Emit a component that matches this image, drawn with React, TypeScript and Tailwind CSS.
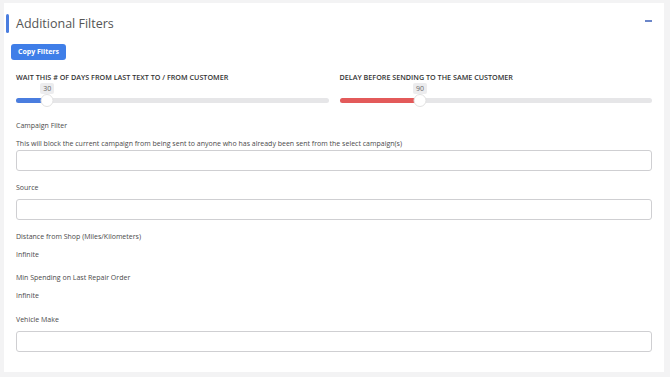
import React from "react";

function Slider({ value, pct, color }: { value: string; pct: number; color: string }) {
  return (
    <div className="relative h-[26px]">
      <div className="absolute left-0 right-0 top-[16px] h-[5px] rounded-full bg-[#e6e6e8]" />
      <div
        className="absolute left-0 top-[16px] h-[5px] rounded-full"
        style={{ width: `${pct}%`, background: color }}
      />
      <div
        className="absolute top-[12px] h-[13px] w-[13px] -translate-x-1/2 rounded-full border border-[#e2e2e2] bg-white"
        style={{ left: `${pct}%` }}
      />
      <div
        className="absolute top-[1px] -translate-x-1/2 rounded-[2px] bg-[#ececee] px-[3px] text-[7px] leading-[11px] text-[#666]"
        style={{ left: `${pct}%` }}
      >
        {value}
      </div>
    </div>
  );
}

function Input() {
  return <div className="h-[21px] rounded-[3px] border border-[#cfcfd2] bg-white" />;
}

export default function App() {
  return (
    <div
      className="h-[377px] w-[670px] bg-[#f3f3f4] pl-[4px] pr-[6px] pt-[3px]"
      style={{ fontFamily: '"Open Sans", "Noto Sans", sans-serif' }}
    >
      <div className="h-[369px] bg-white">
        <div className="flex items-center pt-[10px]">
          <div className="ml-[2px] h-[19px] w-[3px] rounded-full bg-[#4a7ddf]" />
          <div className="ml-[7px] mt-[1px] text-[12.5px] leading-[20px] text-[#555]">Additional Filters</div>
          <div className="ml-auto mr-[12px] mt-[-5px] h-[2px] w-[7px] bg-[#6b86c9]" />
        </div>
        <div className="flex px-[7px] pt-[10px]">
          <button className="h-[16px] rounded-[3px] bg-[#3f7ee8] px-[7px] text-[7px] font-bold leading-[16px] text-white">
            Copy Filters
          </button>
        </div>
        <div className="flex gap-[11px] px-[12px] pt-[12px]">
          <div className="flex-1">
            <div className="text-[7.2px] font-semibold leading-[10px] text-[#333]">
              WAIT THIS # OF DAYS FROM LAST TEXT TO / FROM CUSTOMER
            </div>
            <Slider value="30" pct={10} color="#4a7ddf" />
          </div>
          <div className="flex-1">
            <div className="text-[7.2px] font-semibold leading-[10px] text-[#333]">
              DELAY BEFORE SENDING TO THE SAME CUSTOMER
            </div>
            <Slider value="90" pct={25.8} color="#e35a5a" />
          </div>
        </div>
        <div className="px-[12px] pt-[13px] text-[7px] leading-[10px] text-[#4a4a4a]">
          <div>Campaign Filter</div>
          <div className="pt-[8px]">
            This will block the current campaign from being sent to anyone who has already been sent from the select campaign(s)
          </div>
          <div className="pt-[1px]">
            <Input />
          </div>
          <div className="pt-[12px]">Source</div>
          <div className="pt-[6px]">
            <Input />
          </div>
          <div className="pt-[12px]">Distance from Shop (Miles/Kilometers)</div>
          <div className="pt-[8px]">Infinite</div>
          <div className="pt-[13px]">Min Spending on Last Repair Order</div>
          <div className="pt-[8px]">Infinite</div>
          <div className="pt-[14px]">Vehicle Make</div>
          <div className="pt-[6px]">
            <Input />
          </div>
        </div>
      </div>
    </div>
  );
}
